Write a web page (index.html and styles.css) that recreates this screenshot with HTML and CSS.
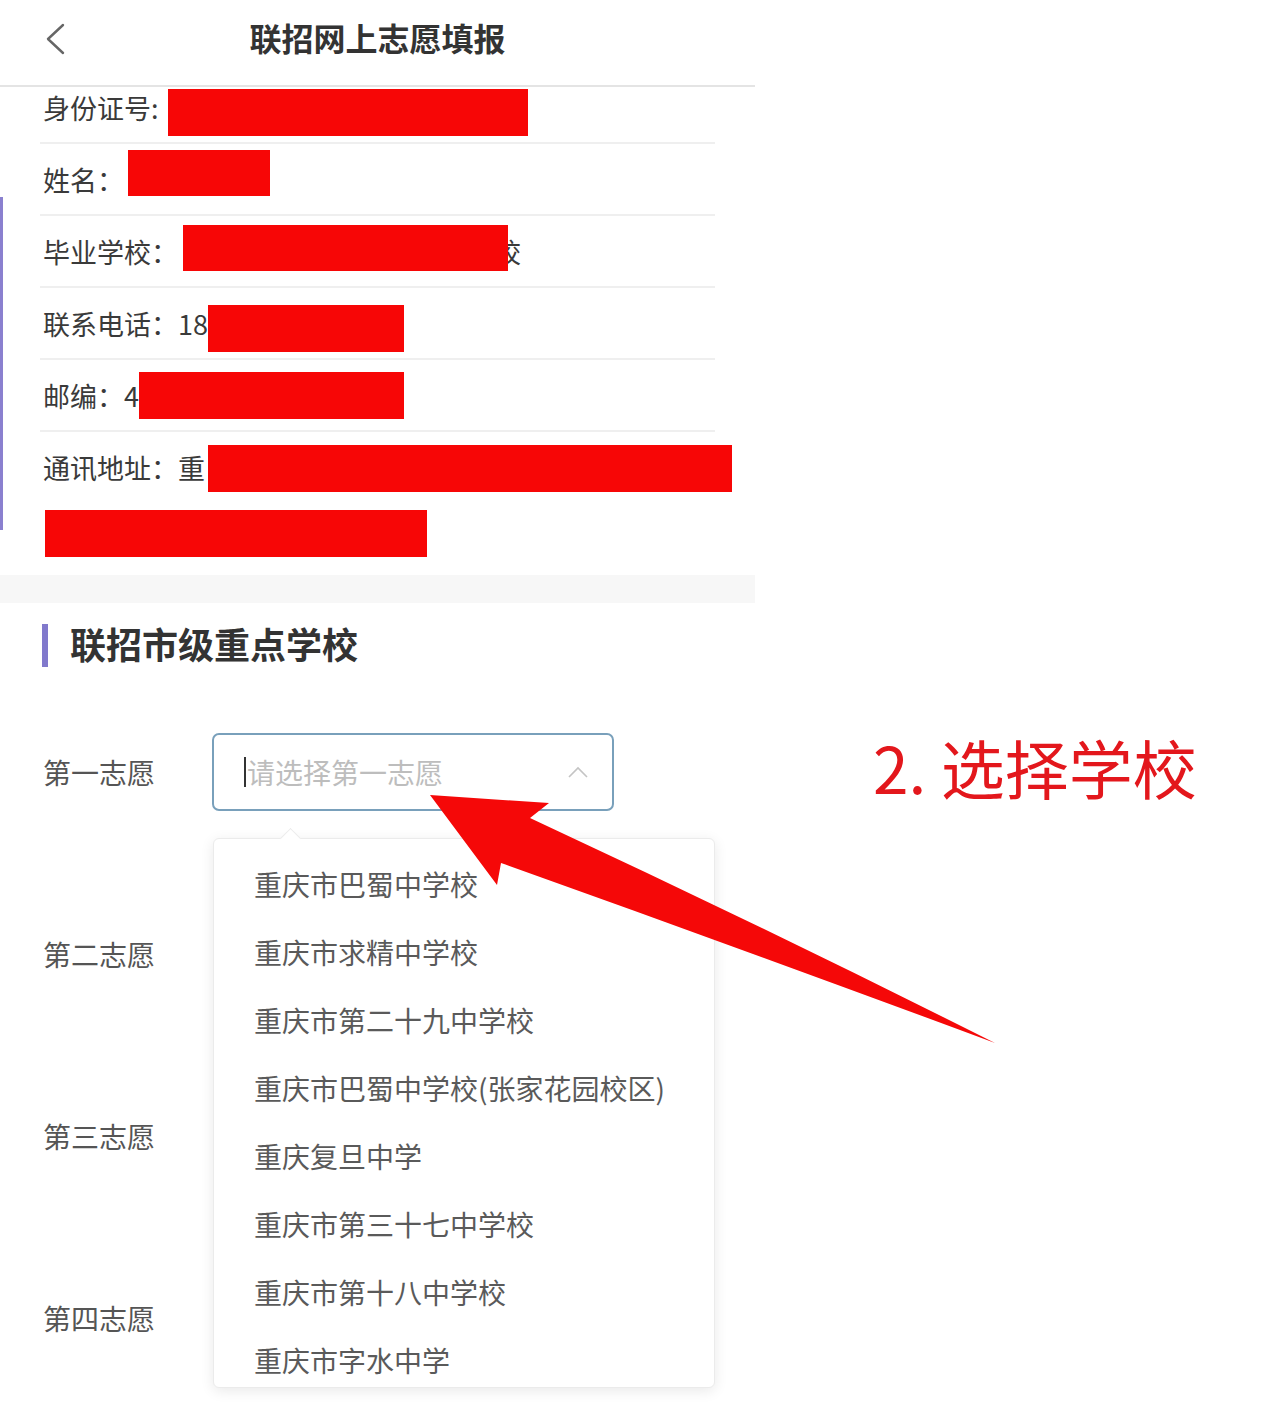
FILE: index.html
```html
<!DOCTYPE html>
<html lang="zh-CN">
<head>
<meta charset="utf-8">
<title>联招网上志愿填报</title>
<link rel="stylesheet" href="styles.css">
</head>
<body>
<div class="page">
  <div class="phone">
    <header class="topbar">
      <svg class="back" viewBox="0 0 22 32" aria-hidden="true"><polyline points="19,2 4,16 19,30"/></svg>
      <h1 class="title">联招网上志愿填报</h1>
      <span></span>
    </header>

    <div class="info">
      <div class="row row-id"><span>身份证号:</span><i class="redact r-id"></i></div>
      <div class="row"><span>姓名：</span><i class="redact r-name"></i></div>
      <div class="row"><span>毕业学校：</span><span class="school-tail">校</span><i class="redact r-school"></i></div>
      <div class="row"><span>联系电话：18</span><i class="redact r-phone"></i></div>
      <div class="row"><span>邮编：4</span><i class="redact r-zip"></i></div>
      <div class="row row-addr"><span>通讯地址：重</span><i class="redact r-addr1"></i><i class="redact r-addr2"></i></div>
    </div>

    <div class="band"></div>

    <div class="section-head">
      <span class="bar"></span>
      <h2 class="section-title">联招市级重点学校</h2>
    </div>

    <div class="choices">
      <div class="choice">
        <span class="label">第一志愿</span>
        <div class="select focused">
          <span class="caret"></span>
          <span class="placeholder">请选择第一志愿</span>
          <svg class="chev" viewBox="0 0 20 12" aria-hidden="true"><polyline points="1,11 10,2 19,11"/></svg>
        </div>
        <div class="dropdown">
          <ul class="options">
            <li>重庆市巴蜀中学校</li>
            <li>重庆市求精中学校</li>
            <li>重庆市第二十九中学校</li>
            <li>重庆市巴蜀中学校(张家花园校区)</li>
            <li>重庆复旦中学</li>
            <li>重庆市第三十七中学校</li>
            <li>重庆市第十八中学校</li>
            <li>重庆市字水中学</li>
          </ul>
        </div>
      </div>
      <div class="choice">
        <span class="label">第二志愿</span>
        <div class="select under"></div>
      </div>
      <div class="choice">
        <span class="label">第三志愿</span>
        <div class="select under"></div>
      </div>
      <div class="choice">
        <span class="label">第四志愿</span>
        <div class="select under"></div>
      </div>
    </div>
  </div>

  <div class="annot"><p class="annot-text">2. 选择学校</p></div>

  <svg class="arrow" viewBox="0 0 1280 1422" aria-hidden="true">
    <path d="M430,795 L549,803 L530,818 Q760,925 995,1043 Q745,950 501,863 L497,885 Z"/>
  </svg>
</div>
</body>
</html>
```

FILE: styles.css
```css
* { box-sizing: border-box; }

html, body {
  margin: 0;
  padding: 0;
  background: #ffffff;
}

body {
  font-family: "Noto Sans CJK SC", "Noto Sans", sans-serif;
  color: #333333;
}

.page {
  position: relative;
  width: 1280px;
  height: 1422px;
  overflow: hidden;
  display: grid;
  grid-template-columns: 755px 1fr;
  align-items: start;
}

.phone {
  width: 755px;
}

/* header */
.topbar {
  height: 87px;
  border-bottom: 2px solid #e4e4e4;
  display: grid;
  grid-template-columns: 1fr auto 1fr;
  align-items: center;
  padding-bottom: 12px;
}

.back {
  width: 22px;
  height: 32px;
  margin-left: 44px;
  margin-top: 4px;
  fill: none;
  stroke: #666666;
  stroke-width: 2.4;
  stroke-linecap: round;
  stroke-linejoin: round;
}

.title {
  margin: 0;
  font-size: 32px;
  font-weight: 700;
  line-height: 1;
  color: #333333;
}

/* info list */
.info {
  position: relative;
  padding: 0 40px;
}

.info::before {
  content: "";
  position: absolute;
  left: 0;
  top: 110px;
  width: 3px;
  height: 333px;
  background: #8a80cf;
}

.row {
  position: relative;
  height: 72px;
  border-bottom: 2px solid #efefef;
  display: flex;
  align-items: center;
  padding-left: 3px;
  font-size: 27px;
  line-height: 1;
  color: #3a3a3a;
  white-space: nowrap;
}

.row-id {
  height: 57px;
  padding-bottom: 14px;
}

.row-addr {
  height: 133px;
  border-bottom: 0;
  align-items: flex-start;
  padding-top: 4px;
  line-height: 64px;
}

.school-tail {
  margin-left: 316px;
}

.redact {
  position: absolute;
  background: #f70606;
}

.r-id { left: 128px; top: 2px; width: 360px; height: 47px; }
.r-name { left: 88px; top: 6px; width: 142px; height: 46px; }
.r-school { left: 143px; top: 9px; width: 325px; height: 46px; }
.r-phone { left: 168px; top: 17px; width: 196px; height: 47px; }
.r-zip { left: 99px; top: 12px; width: 265px; height: 47px; }
.r-addr1 { left: 168px; top: 13px; width: 524px; height: 47px; }
.r-addr2 { left: 5px; top: 78px; width: 382px; height: 47px; }

.band {
  height: 28px;
  margin-top: 10px;
  background: #f7f7f7;
}

/* section heading */
.section-head {
  display: flex;
  align-items: center;
  height: 43px;
  margin: 21px 0 66px 42px;
}

.bar {
  width: 6px;
  height: 43px;
  background: #8179cc;
}

.section-title {
  margin: 0 0 5px 22px;
  font-size: 36px;
  font-weight: 700;
  line-height: 1;
  color: #333333;
}

/* choices */
.choices {
  padding-left: 43px;
}

.choice {
  position: relative;
  display: flex;
  align-items: center;
  height: 78px;
  margin-bottom: 104px;
}

.label {
  width: 169px;
  font-size: 28px;
  line-height: 1;
  color: #555555;
}

.select {
  width: 402px;
  height: 78px;
  border: 2px solid #dcdfe6;
  border-radius: 7px;
  display: flex;
  align-items: center;
  padding: 0 24px 0 30px;
  background: #ffffff;
}

.select.focused {
  border-color: #79a0bb;
}

.select.under {
  border-color: transparent;
}

.caret {
  width: 2px;
  height: 30px;
  background: #333333;
  margin-right: 1px;
}

.placeholder {
  font-size: 28px;
  line-height: 1;
  color: #bdbdbd;
}

.chev {
  width: 20px;
  height: 12px;
  margin-left: auto;
  fill: none;
  stroke: #c4c4c4;
  stroke-width: 1.6;
}

/* dropdown */
.dropdown {
  position: absolute;
  left: 170px;
  top: 105px;
  width: 502px;
  height: 550px;
  background: #ffffff;
  border: 1px solid #ebebeb;
  border-radius: 6px;
  box-shadow: 0 3px 14px rgba(0, 0, 0, 0.09);
  padding-top: 11px;
  z-index: 5;
}

.dropdown::before {
  content: "";
  position: absolute;
  left: 69px;
  top: -8px;
  width: 14px;
  height: 14px;
  background: #ffffff;
  border-top: 1px solid #ebebeb;
  border-left: 1px solid #ebebeb;
  transform: rotate(45deg);
}

.options {
  list-style: none;
  margin: 0;
  padding: 0;
  height: 537px;
  overflow: hidden;
}

.options li {
  height: 68px;
  line-height: 68px;
  padding-left: 40px;
  font-size: 28px;
  color: #5a5a5a;
  white-space: nowrap;
}

/* annotation */
.annot {
  padding: 734px 0 0 118px;
}

.annot-text {
  margin: 0;
  font-size: 64px;
  line-height: 1;
  color: #e3171c;
  white-space: nowrap;
}

.arrow {
  position: absolute;
  left: 0;
  top: 0;
  width: 1280px;
  height: 1422px;
  pointer-events: none;
  z-index: 10;
  fill: #f50808;
}
```
